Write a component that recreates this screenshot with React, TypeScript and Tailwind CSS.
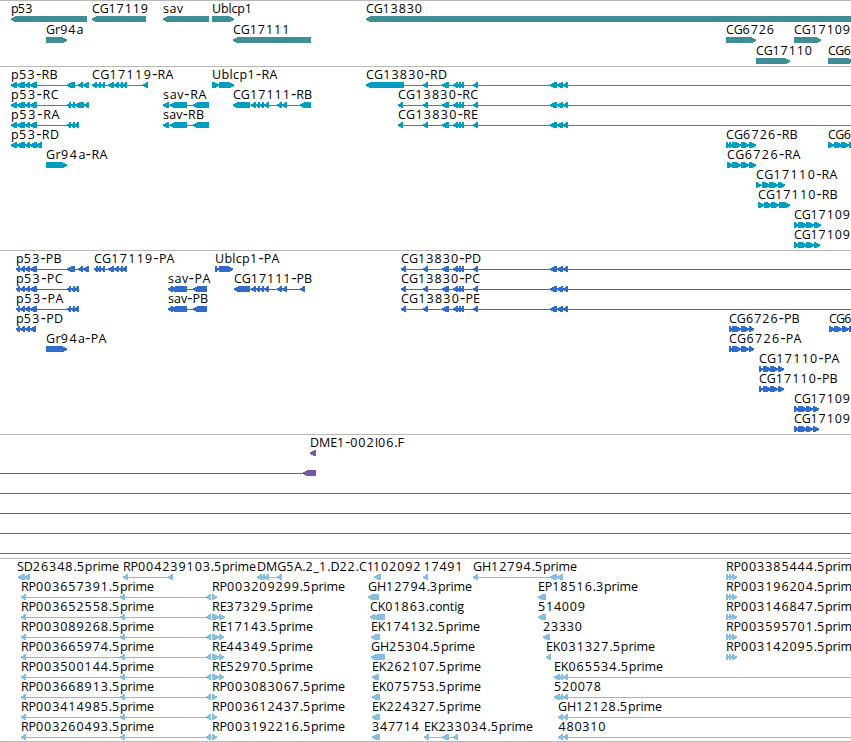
import React from "react";

// name, row, label start, label end, exons, and where the intron line stops
type Feature = {
    name?: string;
    row: number;
    x: number;
    end?: number;
    exons: number[][];
    right?: boolean;
    from?: number;
    to?: number;
};

const WIDTH = 851;

const f = (name: string, row: number, x: number, end: number, exons: number[][], to?: number): Feature => ({
    name, row, x, end, exons, to,
});
const r = (name: string, row: number, x: number, end: number, exons: number[][]): Feature => ({
    name, row, x, end, exons, right: true,
});

const genes: Feature[] = [
    f("p53", 0, 11.5, 34, [[11, 87]]),
    f("CG17119", 0, 92.5, 149.5, [[92, 146]]),
    f("sav", 0, 163.5, 183.5, [[163, 209]]),
    r("Ublcp1", 0, 212.5, 253.5, [[212, 234]]),
    f("CG13830", 0, 366.5, 423.5, [[366, 860]]),
    r("Gr94a", 1, 46.5, 84, [[46, 67]]),
    f("CG17111", 1, 233.5, 291, [[233, 311]]),
    r("CG6726", 1, 726.5, 775.5, [[726, 756]]),
    r("CG17109", 1, 794.5, 851.5, [[794, 821]]),
    r("CG17110", 2, 756.5, 813.5, [[756, 790]]),
    r("CG6", 2, 828.5, 852.5, [[828, 853]]),
];

const p53Head = [[11, 17], [17, 25], [25, 30], [30, 37]];
const p53Cds = [[16, 20], [20, 25], [25, 30], [30, 37]];
const cg13830Tail = [[423, 428], [442, 449], [453, 458], [457, 461], [460, 464], [473, 478], [550, 557], [557, 563], [563, 568]];
const cg17111Mid = [[251, 256], [256, 260], [260, 264], [264, 269], [277, 282], [282, 287]];

const transcripts: Feature[] = [
    f("p53-RB", 0, 11.5, 58, [...p53Head, [67, 75], [78, 83], [83, 89]]),
    f("p53-RC", 1, 11.5, 59, [...p53Head, [67, 71], [71, 75], [75, 84], [84, 89]]),
    f("p53-RA", 2, 11.5, 60, [...p53Head, [67, 71], [71, 75], [74, 79]]),
    f("p53-RD", 3, 11.5, 59.5, [[11, 17], [17, 25], [25, 30], [30, 37], [36, 42]]),
    r("Gr94a-RA", 4, 46.5, 108, [[46, 67]]),
    f("CG17119-RA", 0, 92.5, 174, [[92, 97], [97, 101], [101, 105], [108, 114], [114, 119], [119, 123], [122, 127], [143, 148]]),
    f("sav-RA", 1, 163.5, 207, [[163, 169], [170, 187], [193, 209]]),
    f("sav-RB", 2, 163.5, 204.5, [[163, 169], [170, 187], [193, 209]]),
    r("Ublcp1-RA", 0, 212.5, 278, [[212, 219], [219, 234]]),
    f("CG17111-RB", 1, 233.5, 312.5, [[233, 250], ...cg17111Mid, [300, 311]]),
    f("CG13830-RD", 0, 366.5, 447.5, [[366, 404], ...cg13830Tail], WIDTH),
    f("CG13830-RC", 1, 398.5, 478.5, [[398, 403], ...cg13830Tail], WIDTH),
    f("CG13830-RE", 2, 398.5, 478.5, [[398, 403], ...cg13830Tail], WIDTH),
    r("CG6726-RB", 3, 726.5, 798, [[726, 730], [729, 733], [732, 741], [741, 749], [749, 756]]),
    r("CG6726-RA", 4, 727.5, 801, [[727, 733], [732, 741], [741, 749], [749, 756]]),
    r("CG17110-RA", 5, 756.5, 838, [[756, 761], [762, 770], [769, 778], [778, 785]]),
    r("CG17110-RB", 6, 758.5, 838, [[758, 764], [764, 772], [771, 779], [779, 790]]),
    r("CG17109", 7, 794.5, 851.5, [[794, 799], [798, 807], [806, 814], [814, 821]]),
    r("CG17109", 8, 794.5, 851.5, [[794, 799], [798, 807], [806, 814], [814, 820]]),
    r("CG6", 3, 828.5, 852.5, [[828, 834], [834, 842], [841, 849], [849, 857]]),
];

const proteins: Feature[] = [
    f("p53-PB", 0, 16.5, 62, [...p53Cds, [67, 75], [78, 83], [83, 89]]),
    f("p53-PC", 1, 16.5, 63, [...p53Cds, [67, 71], [71, 75], [74, 79]]),
    f("p53-PA", 2, 16.5, 64, [...p53Cds, [67, 71], [71, 75], [74, 79]]),
    f("p53-PD", 3, 16.5, 63.5, [[16, 20], [20, 25], [25, 30], [30, 36]]),
    r("Gr94a-PA", 4, 46.5, 107, [[46, 67]]),
    f("CG17119-PA", 0, 94.5, 175, [[94, 98], [97, 101], [101, 105], [108, 114], [114, 119], [119, 123], [122, 127]]),
    f("sav-PA", 1, 168.5, 211, [[168, 173], [171, 187], [193, 207]]),
    f("sav-PB", 2, 168.5, 208.5, [[168, 173], [171, 187], [193, 207]]),
    r("Ublcp1-PA", 0, 215.5, 280, [[215, 219], [219, 233]]),
    f("CG17111-PB", 1, 234.5, 312.5, [[234, 250], ...cg17111Mid, [300, 305]]),
    f("CG13830-PD", 0, 401.5, 481.5, [[401, 406], ...cg13830Tail], WIDTH),
    f("CG13830-PC", 1, 401.5, 480.5, [[401, 406], ...cg13830Tail], WIDTH),
    f("CG13830-PE", 2, 401.5, 480.5, [[401, 406], ...cg13830Tail], WIDTH),
    r("CG6726-PB", 3, 729.5, 800, [[729, 733], [732, 741], [741, 749], [749, 754]]),
    r("CG6726-PA", 4, 729.5, 802, [[729, 733], [732, 741], [741, 749], [749, 754]]),
    r("CG17110-PA", 5, 759.5, 840, [[759, 763], [763, 771], [770, 778], [778, 784]]),
    r("CG17110-PB", 6, 759.5, 838, [[759, 763], [763, 771], [770, 778], [778, 784]]),
    r("CG17109", 7, 794.5, 851.5, [[794, 799], [798, 807], [806, 813], [813, 819]]),
    r("CG17109", 8, 794.5, 851.5, [[794, 799], [798, 807], [806, 813], [813, 819]]),
    r("CG6", 3, 829.5, 853, [[829, 835], [834, 842], [842, 849], [849, 857]]),
];

const bacs: Feature[] = [
    f("DME1-002I06.F", 0, 310.5, 404.5, [[310, 316]]),
    { row: 1, x: 0, from: 0, to: 316, exons: [[303, 316]] },
    ...[2, 3, 4, 5].map((row) => ({ row, x: 0, from: 0, to: WIDTH, exons: [] })),
];

const leftReads = [
    "RP003657391", "RP003652558", "RP003089268", "RP003665974",
    "RP003500144", "RP003668913", "RP003414985", "RP003260493",
];
const rightReads = ["RP003385444", "RP003196204", "RP003146847", "RP003595701", "RP003142095"];

const ests: Feature[] = [
    f("SD26348.5prime", 0, 17.5, 119.5, [[18, 25], [24, 30]]),
    f("RP004239103.5prime", 0, 123.5, 256.5, [[123, 128], [168, 173]]),
    f("DMG5A.2_1.D22.C1", 0, 257.5, 375.5, [[257, 262], [261, 265], [264, 269], [277, 282]]),
    f("102092", 0, 373.5, 422, [[374, 381]]),
    f("17491", 0, 424, 464, [[423, 428]]),
    f("GH12794.5prime", 0, 473.5, 577.5, [[473, 478], [550, 557], [557, 563]]),
    ...leftReads.map((name, i) => f(name + ".5prime", i + 1, 21.5, 154.5, [[21, 26], [120, 125], [206, 211]])),
    r("RP003209299.5prime", 1, 212.5, 345.5, [[212, 217]]),
    r("RE37329.5prime", 2, 212.5, 313.5, [[212, 219], [219, 225]]),
    r("RE17143.5prime", 3, 212.5, 313.5, [[212, 219], [219, 224]]),
    r("RE44349.5prime", 4, 212.5, 313.5, [[212, 219], [219, 224]]),
    r("RE52970.5prime", 5, 212.5, 313.5, [[212, 219], [219, 224]]),
    r("RP003083067.5prime", 6, 212.5, 345.5, [[212, 217]]),
    r("RP003612437.5prime", 7, 212.5, 345.5, [[212, 217]]),
    r("RP003192216.5prime", 8, 212.5, 345.5, [[212, 217]]),
    f("GH12794.3prime", 1, 368.5, 472.5, [[368, 379]]),
    f("CK01863.contig", 2, 370.5, 464.5, [[370, 375], [373, 385]]),
    f("EK174132.5prime", 3, 371.5, 480.5, [[371, 380]]),
    f("GH25304.5prime", 4, 371.5, 475.5, [[371, 385]]),
    f("EK262107.5prime", 5, 372.5, 481.5, [[372, 379]]),
    f("EK075753.5prime", 6, 372.5, 481.5, [[372, 380]]),
    f("EK224327.5prime", 7, 372.5, 481.5, [[372, 380]]),
    f("347714", 8, 372.5, 420.5, [[372, 380]]),
    f("EK233034.5prime", 8, 424.5, 533.5, [[424, 429], [442, 449], [453, 458]]),
    f("EP18516.3prime", 1, 538.5, 638.5, [[538, 546]]),
    f("514009", 2, 538.5, 586.5, [[538, 546]]),
    f("23330", 3, 543.5, 583.5, [[543, 550]]),
    f("EK031327.5prime", 4, 546.5, 655.5, [[546, 551]]),
    f("EK065534.5prime", 5, 554.5, 663.5, [[554, 560], [559, 563], [563, 568]], WIDTH),
    f("520078", 6, 554.5, 602.5, [[554, 560], [559, 563], [563, 568]], WIDTH),
    f("GH12128.5prime", 7, 558.5, 662.5, [[558, 563], [563, 568]], WIDTH),
    f("480310", 8, 559, 607, [[558, 563], [563, 568]], WIDTH),
    ...rightReads.map((name, i) => r(name + ".5prim", i, 726.5, 852.5, [[726, 729], [729, 732], [732, 737]])),
];

// how far each of the six pixel rows of an arrow stays back from its tip
const INSETS = [4, 2, 0, 0, 1, 3];

const arrow = (start: number, end: number, y: number, right?: boolean) =>
    INSETS.map((value, i) => {
        const inset = Math.min(value, end - start - 2);
        const x = right ? start : start + inset;
        return `M${x} ${y + i}h${end - start - inset}v1H${x}z`;
    }).join("");

const Label = ({ name, x, end, y }: { name: string; x: number; end: number; y: number }) => (
    <text x={x - 0.5} y={y} textLength={end - x} className="fill-black">
        {name.split(/(\d+|-)/).map((part, i) => {
            if (part === "-") return <tspan key={i} className="text-[16px]">-</tspan>;
            return /\d/.test(part) ? <tspan key={i} className="tracking-[1.1px]">{part}</tspan> : part;
        })}
    </text>
);

const Track = ({ features, color, height, pitch = 20 }: { features: Feature[]; color: string; height: string; pitch?: number }) => (
    <section className={`w-full shrink-0 border-t border-[#b9b9b9] ${height}`}>
        <svg className={`block h-full w-full overflow-visible ${color}`} fill="currentColor">
            {features.map((item, i) => {
                const top = item.row * pitch;
                const { exons } = item;
                const from = item.from ?? exons[0][0];
                const to = item.to ?? exons[exons.length - 1][1];
                return (
                    <g key={i}>
                        {item.name && <Label name={item.name} x={item.x} end={item.end!} y={top + 12} />}
                        <g shapeRendering="crispEdges">
                            {(exons.length !== 1 || item.from !== undefined) && (
                                <rect x={from} y={top + 18} width={to - from} height={1} />
                            )}
                            {exons.map(([start, end], j) => (
                                <path key={j} d={arrow(start, end, top + 15, item.right)} />
                            ))}
                        </g>
                    </g>
                );
            })}
        </svg>
    </section>
);

const App = () => {
    return (
        <main className="flex h-[742px] w-[851px] flex-col overflow-hidden bg-white font-['Open_Sans','Noto_Sans',sans-serif] text-[12.5px]">
            <Track features={genes} color="text-[#3f8e95]" height="h-[66px]" pitch={21} />
            <Track features={transcripts} color="text-[#009fc1]" height="h-[184px]" />
            <Track features={proteins} color="text-[#306bcd]" height="h-[184px]" />
            <Track features={bacs} color="text-[#7859a8]" height="h-[124px]" />
            <Track features={ests} color="text-[#87bddf]" height="h-[183px]" />
            <div className="h-px w-full bg-[#b9b9b9]" />
        </main>
    );
};

export default App;
